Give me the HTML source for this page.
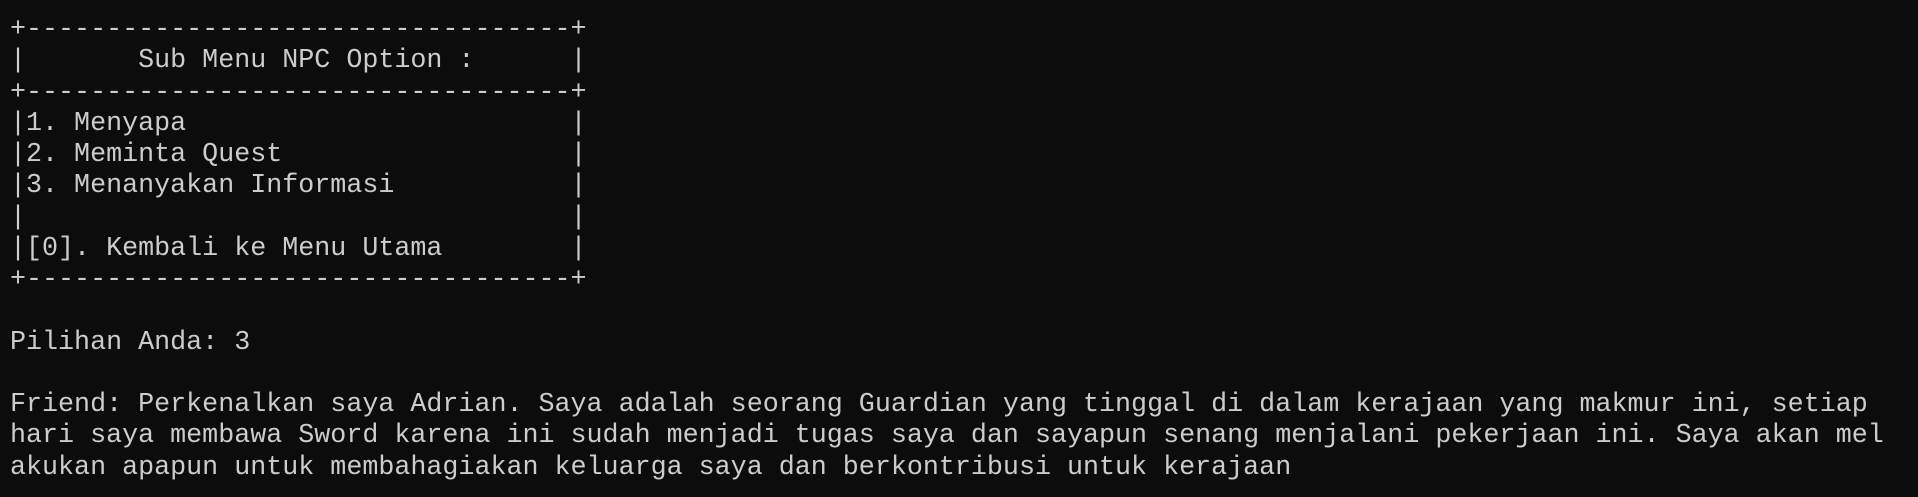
<!DOCTYPE html>
<html><head><meta charset="utf-8"><style>
html,body{margin:0;padding:0;background:#0c0c0c;width:1918px;height:497px;overflow:hidden}
pre{margin:0;position:absolute;left:10px;top:15px;font-family:"Liberation Mono","DejaVu Sans Mono",monospace;font-size:26.7px;line-height:31.25px;color:#cccccc;white-space:pre}
</style></head><body><pre>+----------------------------------+
|       Sub Menu NPC Option :      |
+----------------------------------+
|1. Menyapa                        |
|2. Meminta Quest                  |
|3. Menanyakan Informasi           |
|                                  |
|[0]. Kembali ke Menu Utama        |
+----------------------------------+

Pilihan Anda: 3

Friend: Perkenalkan saya Adrian. Saya adalah seorang Guardian yang tinggal di dalam kerajaan yang makmur ini, setiap
hari saya membawa Sword karena ini sudah menjadi tugas saya dan sayapun senang menjalani pekerjaan ini. Saya akan mel
akukan apapun untuk membahagiakan keluarga saya dan berkontribusi untuk kerajaan</pre></body></html>
